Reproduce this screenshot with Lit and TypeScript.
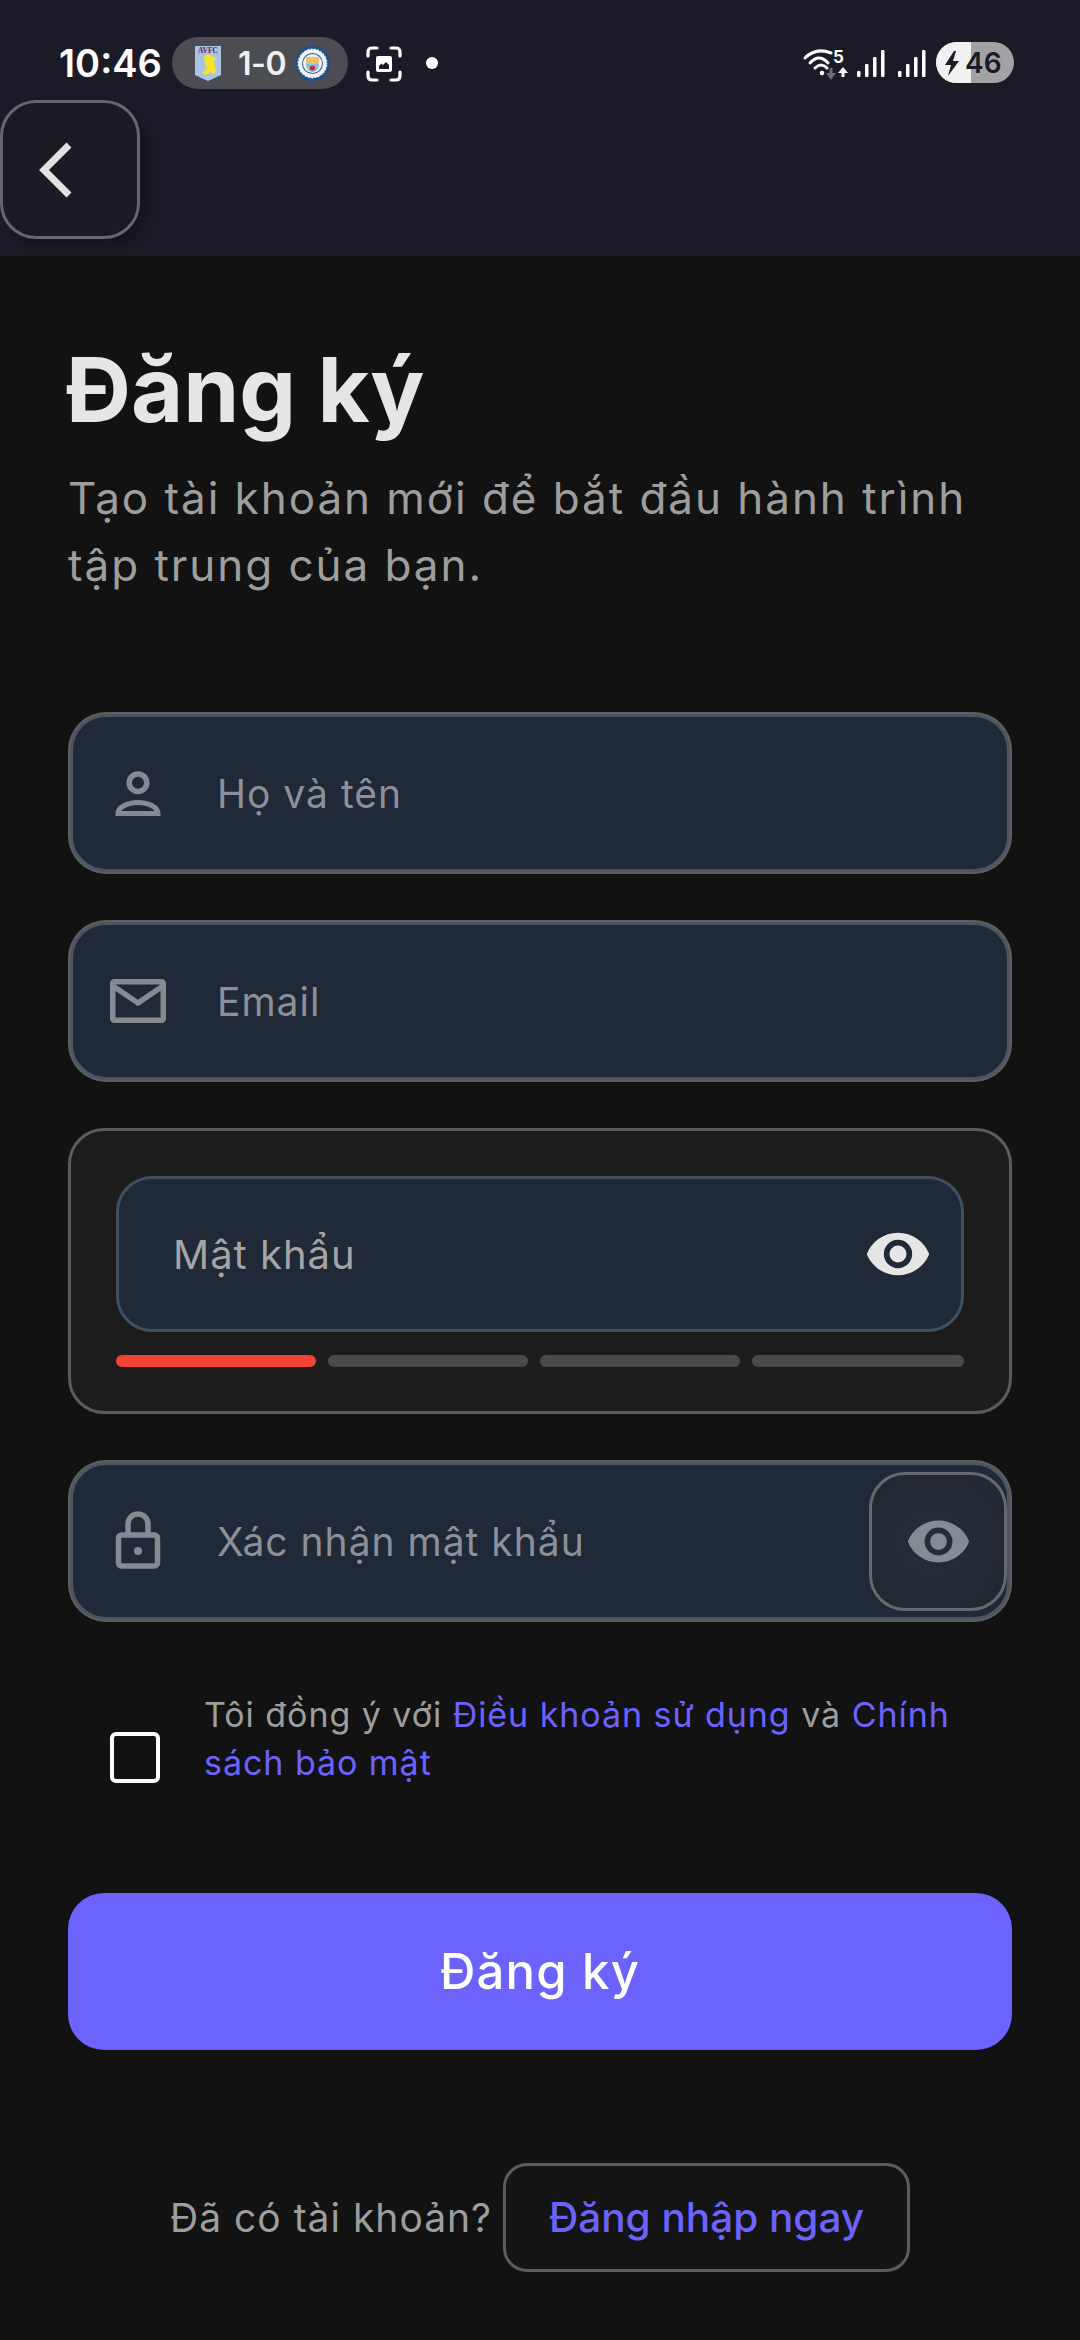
import { LitElement, html, css, svg } from "lit";
import { customElement } from "lit/decorators.js";

const eyePath = "M12 4.5C7 4.5 2.7 7.6 1 12c1.7 4.4 6 7.5 11 7.5s9.3-3.1 11-7.5c-1.7-4.4-6-7.5-11-7.5zM12 17a5 5 0 1 1 0-10 5 5 0 0 1 0 10zm0-8a3 3 0 1 0 0 6 3 3 0 0 0 0-6z";

const eye = () => html`<svg viewBox="0 0 24 24"><path fill="currentColor" fill-rule="evenodd" d=${eyePath}/></svg>`;

const bars = (x: number) => svg`
  <g fill="#fff">
    <rect x=${x} y="31" width="3.500" height="6" rx="1"/>
    <rect x=${x + 8} y="24" width="3.500" height="13" rx="1"/>
    <rect x=${x + 16} y="17" width="3.500" height="20" rx="1"/>
    <rect x=${x + 24} y="10" width="3.500" height="27" rx="1"/>
  </g>`;

@customElement("app-root")
export class AppRoot extends LitElement {
  static styles = css`
    :host { display: block; width: 1080px; height: 2340px; background: #121212; font-family: Inter, "Noto Sans", sans-serif; overflow: hidden; }
    .top { height: 256px; background: #1a1b26; box-sizing: border-box; position: relative; }
    .status { height: 100px; box-sizing: border-box; padding: 37px 0 0 59px; display: flex; align-items: flex-start; color: #fff; }
    .time { font-size: 38px; font-weight: 600; line-height: 52px; width: 107px; white-space: nowrap; }
    .pill { width: 176px; height: 52px; margin-left: 6px; border-radius: 26px; background: #4c4d52; display: flex; align-items: center; box-sizing: border-box; padding-left: 23px; flex: none; }
    .crest { width: 26px; height: 35px; flex: none; }
    .score { font-size: 32px; font-weight: 600; width: 57px; margin-left: 17px; color: #f1f1f1; white-space: nowrap; letter-spacing: -0.5px; }
    .city { width: 35px; height: 35px; flex: none; }
    .shot { width: 36px; height: 36px; margin: 9px 0 0 18px; flex: none; }
    .dot { width: 12px; height: 12px; border-radius: 50%; background: #fff; margin: 20px 0 0 24px; flex: none; }
    .sys { position: absolute; left: 800px; top: 40px; width: 136px; height: 44px; }
    .batt { position: absolute; left: 936px; top: 42px; width: 78px; height: 41px; }
    .back { position: absolute; left: 0; top: 100px; width: 140px; height: 139px; box-sizing: border-box; border: 3px solid #66666e; border-radius: 36px; background: #1a1a24; box-shadow: 8px 8px 10px rgba(18,18,20,.6); display: flex; align-items: center; justify-content: center; }
    .back svg { width: 40px; height: 60px; margin-right: 27px; }
    .main { padding: 0 68px; }
    h1 { margin: 0 0 0 -2px; padding-top: 83px; font-size: 90px; line-height: 102px; font-weight: 700; color: #e6e6e6; white-space: nowrap; }
    .sub { margin: 0; padding-top: 24px; font-size: 44px; line-height: 67px; color: #9e9e9e; letter-spacing: 1.95px; }
    .form { margin-top: 113px; display: flex; flex-direction: column; gap: 46px; }
    .field { height: 158px; box-sizing: border-box; border-radius: 36px; background: #1f2937; border: 3px solid #4b5563; box-shadow: 0 0 0 2px #5f5f5f; display: flex; align-items: center; margin: 2px; position: relative; }
    .field .ico { width: 60px; height: 60px; margin-left: 35px; color: #868b93; flex: none; }
    .ph { font-size: 39px; letter-spacing: 1px; color: #8b9099; margin-left: 49px; white-space: nowrap; }
    .card { height: 286px; box-sizing: border-box; border: 3px solid #5c5c5c; border-radius: 36px; background: #1c1c1c; padding: 45px 45px 0; }
    .inner { height: 156px; box-sizing: border-box; border-radius: 36px; background: #1f2937; border: 3px solid #414f63; display: flex; align-items: center; justify-content: space-between; padding: 0 29px 0 54px; }
    .inner .ph { margin: 0; color: #a5a5a5; font-size: 40px; }
    .inner svg { width: 68px; height: 68px; color: #e6e6e6; }
    .bars { display: flex; gap: 12px; margin-top: 23px; }
    .bar { flex: none; width: 200px; height: 12px; border-radius: 6px; background: #4a4a4a; }
    .bar:last-child { flex: 1; }
    .bar.on { background: #f44336; }
    .toggle { position: absolute; right: 0; top: 7px; width: 138px; height: 139px; box-sizing: border-box; border: 3px solid #67696e; border-radius: 36px; background: radial-gradient(circle at 45% 50%, #232d3a 0%, #22272f 100%); display: flex; align-items: center; justify-content: center; }
    .toggle svg { width: 67px; height: 67px; color: #868b93; }
    .terms { display: flex; align-items: flex-start; margin-top: 69px; padding-left: 42px; }
    .box { width: 50px; height: 51px; box-sizing: border-box; border: 4px solid #fff; border-radius: 6px; flex: none; margin-top: 41px; }
    .terms p { margin: 0 0 0 44px; font-size: 34px; line-height: 48px; letter-spacing: 0.95px; color: #9e9e9e; }
    .terms b { font-weight: 400; color: #6c63ff; }
    .cta { margin-top: 106px; height: 157px; border-radius: 36px; background: #6c63ff; color: #fff; display: flex; align-items: center; justify-content: center; font-size: 49px; font-weight: 500; letter-spacing: 1.2px; }
    .foot { display: flex; align-items: center; margin-top: 113px; padding-left: 102px; }
    .foot span { font-size: 39px; letter-spacing: 1px; color: #9e9e9e; white-space: nowrap; }
    .link { margin-left: 11px; height: 109px; width: 407px; box-sizing: border-box; border: 3px solid #5c5c5c; border-radius: 24px; background: #141414; display: flex; align-items: center; justify-content: center; color: #6c63ff; font-size: 40.5px; font-weight: 500; white-space: nowrap; }
  `;

  render() {
    return html`
      <div class="top">
        <div class="status">
          <div class="time">10:46</div>
          <div class="pill">
            <svg class="crest" viewBox="0 0 26 35">
              <path d="M0 0h26v29q-6 3-13 6Q6 32 0 29z" fill="#a9c4e4"/>
              <text x="13" y="7" font-size="7.500" font-family="Liberation Serif" font-weight="700" fill="#6b1a4f" text-anchor="middle">AVFC</text>
              <path d="M9 10q6-3 9 1l3 0-2 5 2 10-3 3-2-3-5 3-4-2 5-5-2-4z" fill="#f6e524"/>
            </svg>
            <div class="score">1-0</div>
            <svg class="city" viewBox="0 0 35 35">
              <circle cx="17.500" cy="17.500" r="17.500" fill="#1b4f8f"/>
              <circle cx="17.500" cy="17.500" r="15" fill="#f4f4f4"/>
              <circle cx="17.500" cy="17.500" r="15" fill="none" stroke="#2a5d98" stroke-width="1.500" stroke-dasharray="2 1.500"/>
              <circle cx="17.500" cy="17.500" r="10.500" fill="#2a5d98"/>
              <circle cx="17.500" cy="17.500" r="9.500" fill="#f4f4f4"/>
              <rect x="11" y="11" width="13" height="7" fill="#eec16d"/>
              <path d="M11 18h13q0 7-6.500 8Q11 25 11 18z" fill="#8dbbe0"/>
              <circle cx="17.500" cy="22" r="2.600" fill="#c2303a"/>
            </svg>
          </div>
          <svg class="shot" viewBox="0 0 36 36" fill="none" stroke="#fff" stroke-width="3.200" stroke-linecap="round">
            <path d="M2 10V6q0-4 4-4h5M25 2h5q4 0 4 4v4M34 26v4q0 4-4 4h-5M11 34H6q-4 0-4-4v-4"/>
            <path stroke="none" fill="#fff" fill-rule="evenodd" d="M10 12q0-2 2-2h12q2 0 2 2v12q0 2-2 2H12q-2 0-2-2zM13 23h10v-4l-3-3-3 3-1.500-1.500L13 20z"/>
          </svg>
          <div class="dot"></div>
        </div>
        <svg class="sys" viewBox="0 0 136 44">
          <g fill="none" stroke="#fff" stroke-width="3" stroke-linecap="round">
            <path d="M5 18Q16 7 31 13"/><path d="M10 23Q19 13 28 23"/><path d="M15 28Q21 22 27 28"/>
          </g>
          <circle cx="22" cy="33" r="2.300" fill="#fff"/>
          <text x="33" y="23" font-size="17" font-weight="700" font-family="Inter" fill="#fff">5</text>
          <path d="M31 28v6" stroke="#6a6a70" stroke-width="3"/><path d="M26 33h10l-5 7z" fill="#6a6a70"/>
          <path d="M43 37v-6" stroke="#fff" stroke-width="3"/><path d="M38 33l5-6 5 6z" fill="#fff"/>
          ${bars(57)}
          ${bars(98)}
        </svg>
        <svg class="batt" viewBox="0 0 78 41">
          <clipPath id="b"><rect width="78" height="41" rx="20.500"/></clipPath>
          <g clip-path="url(#b)"><rect width="78" height="41" fill="#a2a2a6"/><rect width="35" height="41" fill="#f1f1f1"/></g>
          <path d="M18 9L9 23h6l-3 11 11-15h-6l3-10z" fill="#1a1b26"/>
          <text x="29" y="31" font-size="28" font-weight="600" font-family="Inter" fill="#1a1b26">46</text>
        </svg>
        <div class="back">
          <svg viewBox="0 0 40 60" fill="none" stroke="#e2e2e2" stroke-width="7"><path d="M32 5L7 30l25 25"/></svg>
        </div>
      </div>
      <div class="main">
        <h1>Đăng ký</h1>
        <p class="sub">Tạo tài khoản mới để bắt đầu hành trình tập trung của bạn.</p>
        <div class="form">
          <div class="field">
            <svg class="ico" viewBox="0 0 60 60" fill="none" stroke="currentColor" stroke-width="5.500">
              <circle cx="30" cy="19.700" r="8.800"/>
              <path stroke-width="5" d="M10 50.500c0-6 9-11 20-11s20 5 20 11z"/>
            </svg>
            <span class="ph">Họ và tên</span>
          </div>
          <div class="field">
            <svg class="ico" viewBox="0 0 60 60" fill="none" stroke="currentColor" stroke-width="5.500" stroke-linejoin="round">
              <rect x="4.750" y="10.750" width="50.500" height="38.500" rx="1.500"/>
              <path d="M5 15l25 17 25-17"/>
            </svg>
            <span class="ph">Email</span>
          </div>
          <div class="card">
            <div class="inner"><span class="ph">Mật khẩu</span>${eye()}</div>
            <div class="bars"><div class="bar on"></div><div class="bar"></div><div class="bar"></div><div class="bar"></div></div>
          </div>
          <div class="field">
            <svg class="ico" viewBox="0 0 60 60" fill="none" stroke="currentColor" stroke-width="5.500">
              <path d="M20 24V13a10 10 0 0 1 20 0v11"/>
              <rect x="10.500" y="24" width="39" height="31" rx="3"/>
              <circle cx="30" cy="40" r="4" fill="currentColor" stroke="none"/>
            </svg>
            <span class="ph">Xác nhận mật khẩu</span>
            <div class="toggle">${eye()}</div>
          </div>
        </div>
        <div class="terms">
          <div class="box"></div>
          <p>Tôi đồng ý với <b>Điều khoản sử dụng</b> và <b>Chính</b> <b>sách bảo mật</b></p>
        </div>
        <div class="cta">Đăng ký</div>
        <div class="foot">
          <span>Đã có tài khoản?</span>
          <div class="link">Đăng nhập ngay</div>
        </div>
      </div>
    `;
  }
}
